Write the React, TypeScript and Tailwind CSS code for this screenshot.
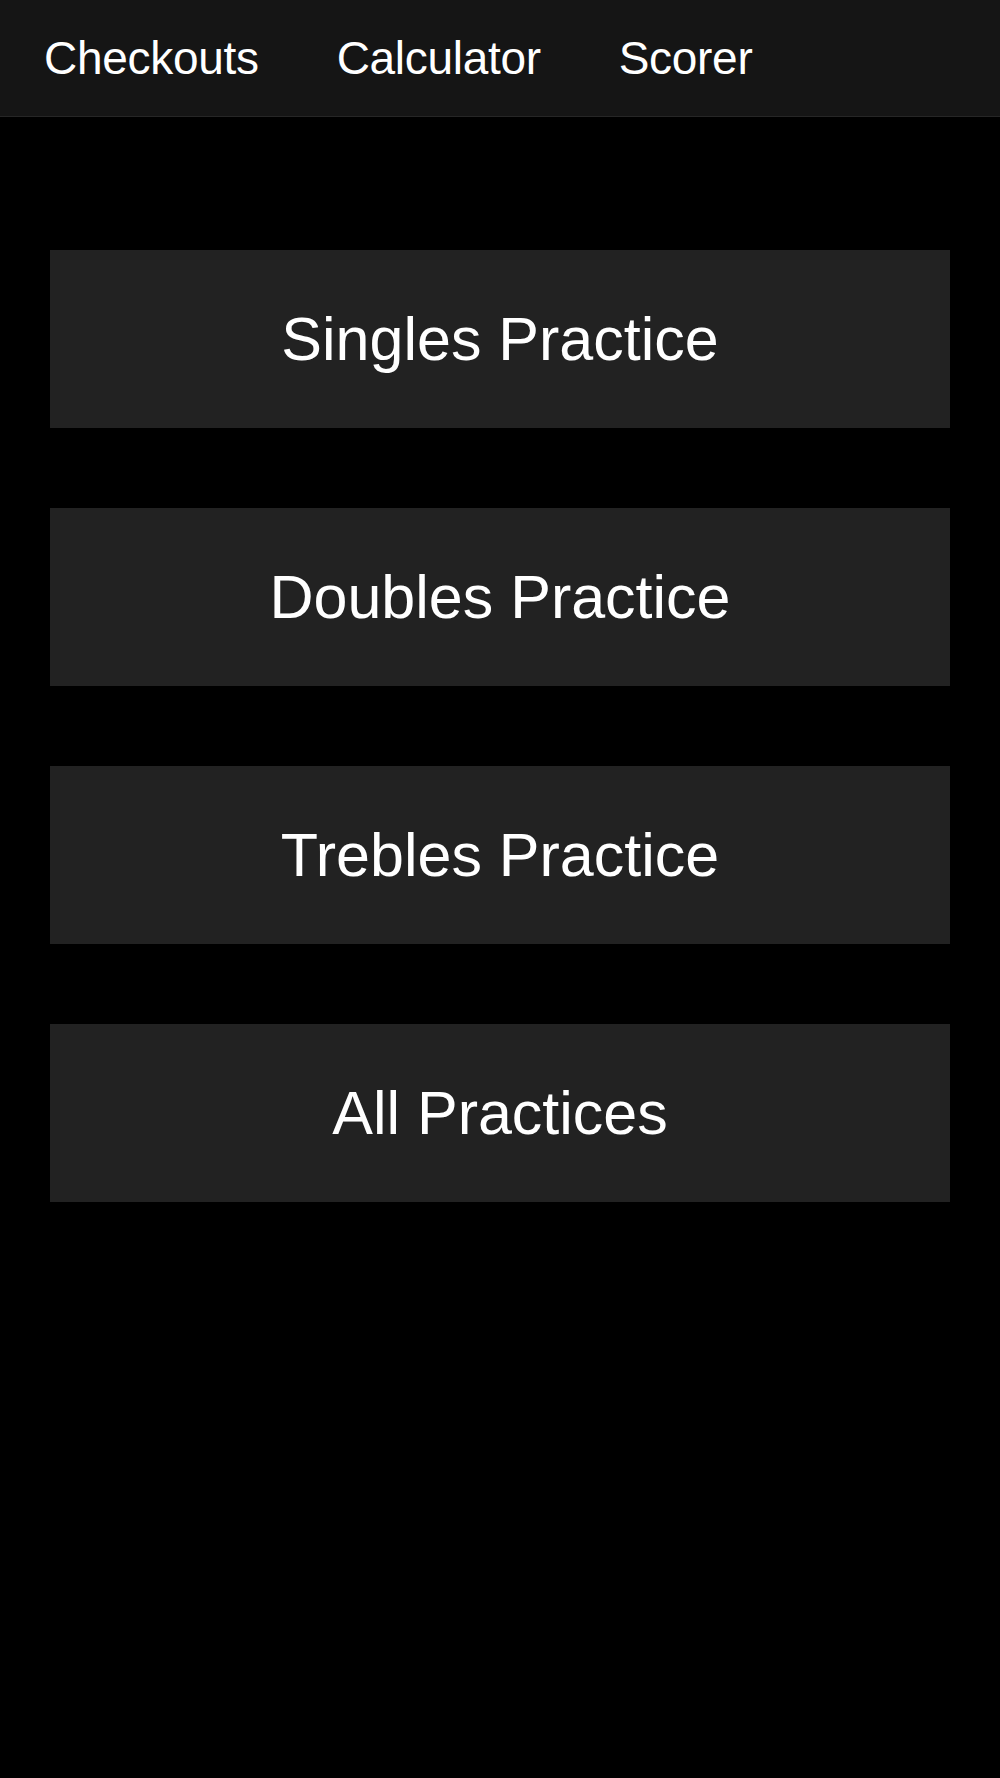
import React from "react";

const practices = ["Singles Practice", "Doubles Practice", "Trebles Practice", "All Practices"];

const App = () => {
  return (
    <div
      className="min-h-[1778px] bg-black text-white"
      style={{ fontFamily: '"Liberation Sans", Arial, sans-serif' }}
    >
      {/* Top nav */}
      <nav className="h-[117px] bg-[#151515] border-b border-[#262626] flex items-center pl-[44px] gap-[78px]">
        <a className="text-[46px] leading-none tracking-[-0.3px]">Checkouts</a>
        <a className="text-[46px] leading-none tracking-[-0.3px]">Calculator</a>
        <a className="text-[46px] leading-none tracking-[-0.3px]">Scorer</a>
      </nav>

      {/* Practice buttons */}
      <div className="px-[50px] pt-[133px] flex flex-col gap-[80px]">
        {practices.map((p) => (
          <button
            key={p}
            className="h-[178px] w-full bg-[#222222] flex items-center justify-center text-[61px] leading-none text-white"
          >
            {p}
          </button>
        ))}
      </div>
    </div>
  );
};

export default App;
